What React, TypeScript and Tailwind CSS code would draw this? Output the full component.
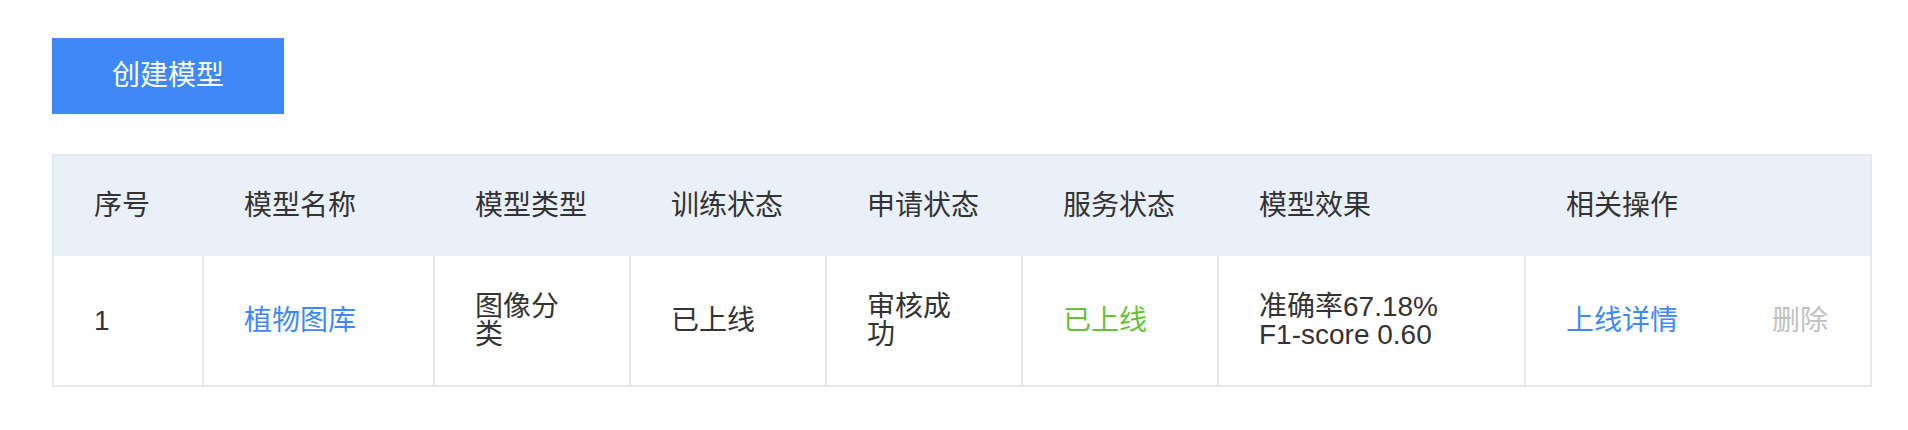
import React from "react";

const FONT = `"Liberation Sans", "Noto Sans CJK SC", sans-serif`;

const widths = [148, 231, 196, 196, 196, 196, 307, 346];
const headers = ["序号", "模型名称", "模型类型", "训练状态", "申请状态", "服务状态", "模型效果", "相关操作"];

export default function App() {
  return (
    <div className="w-[1908px] h-[430px] bg-white text-[28px] leading-[28px] text-[#333333]" style={{ fontFamily: FONT }}>
      <div className="pt-[38px] pl-[52px]">
        <button className="w-[232px] h-[76px] bg-[#3e89f7] text-white text-[28px] leading-[28px] flex items-center justify-center">
          创建模型
        </button>
      </div>
      <div className="ml-[52px] mt-[40px] w-[1820px] border-2 border-[#e6e8ef]">
        <div className="flex h-[100px] bg-[#eaf0f8] items-center">
          {headers.map((h, i) => (
            <div
              key={h}
              className={i === 0 ? "pl-[40px] shrink-0" : "pl-[40px] shrink-0 border-l-2 border-transparent"}
              style={{ width: widths[i] }}
            >
              {h}
            </div>
          ))}
        </div>
        <div className="flex h-[129px]">
          <div className="w-[148px] shrink-0 pl-[40px] flex items-center">1</div>
          <div className="w-[231px] shrink-0 pl-[40px] flex items-center border-l-2 border-[#e6e8ef] text-[#3e89f7]">植物图库</div>
          <div className="w-[196px] shrink-0 pl-[40px] flex items-center border-l-2 border-[#e6e8ef]">
            <div className="w-[96px]">图像分类</div>
          </div>
          <div className="w-[196px] shrink-0 pl-[40px] flex items-center border-l-2 border-[#e6e8ef]">已上线</div>
          <div className="w-[196px] shrink-0 pl-[40px] flex items-center border-l-2 border-[#e6e8ef]">
            <div className="w-[96px]">审核成功</div>
          </div>
          <div className="w-[196px] shrink-0 pl-[40px] flex items-center border-l-2 border-[#e6e8ef] text-[#67c23a]">已上线</div>
          <div className="w-[307px] shrink-0 pl-[40px] flex items-center border-l-2 border-[#e6e8ef]">
            <div>
              <div>准确率67.18%</div>
              <div>F1-score 0.60</div>
            </div>
          </div>
          <div className="w-[346px] shrink-0 pl-[40px] flex items-center gap-[94px] border-l-2 border-[#e6e8ef]">
            <span className="text-[#3e89f7]">上线详情</span>
            <span className="text-[#c0c0c0]">删除</span>
          </div>
        </div>
      </div>
    </div>
  );
}
